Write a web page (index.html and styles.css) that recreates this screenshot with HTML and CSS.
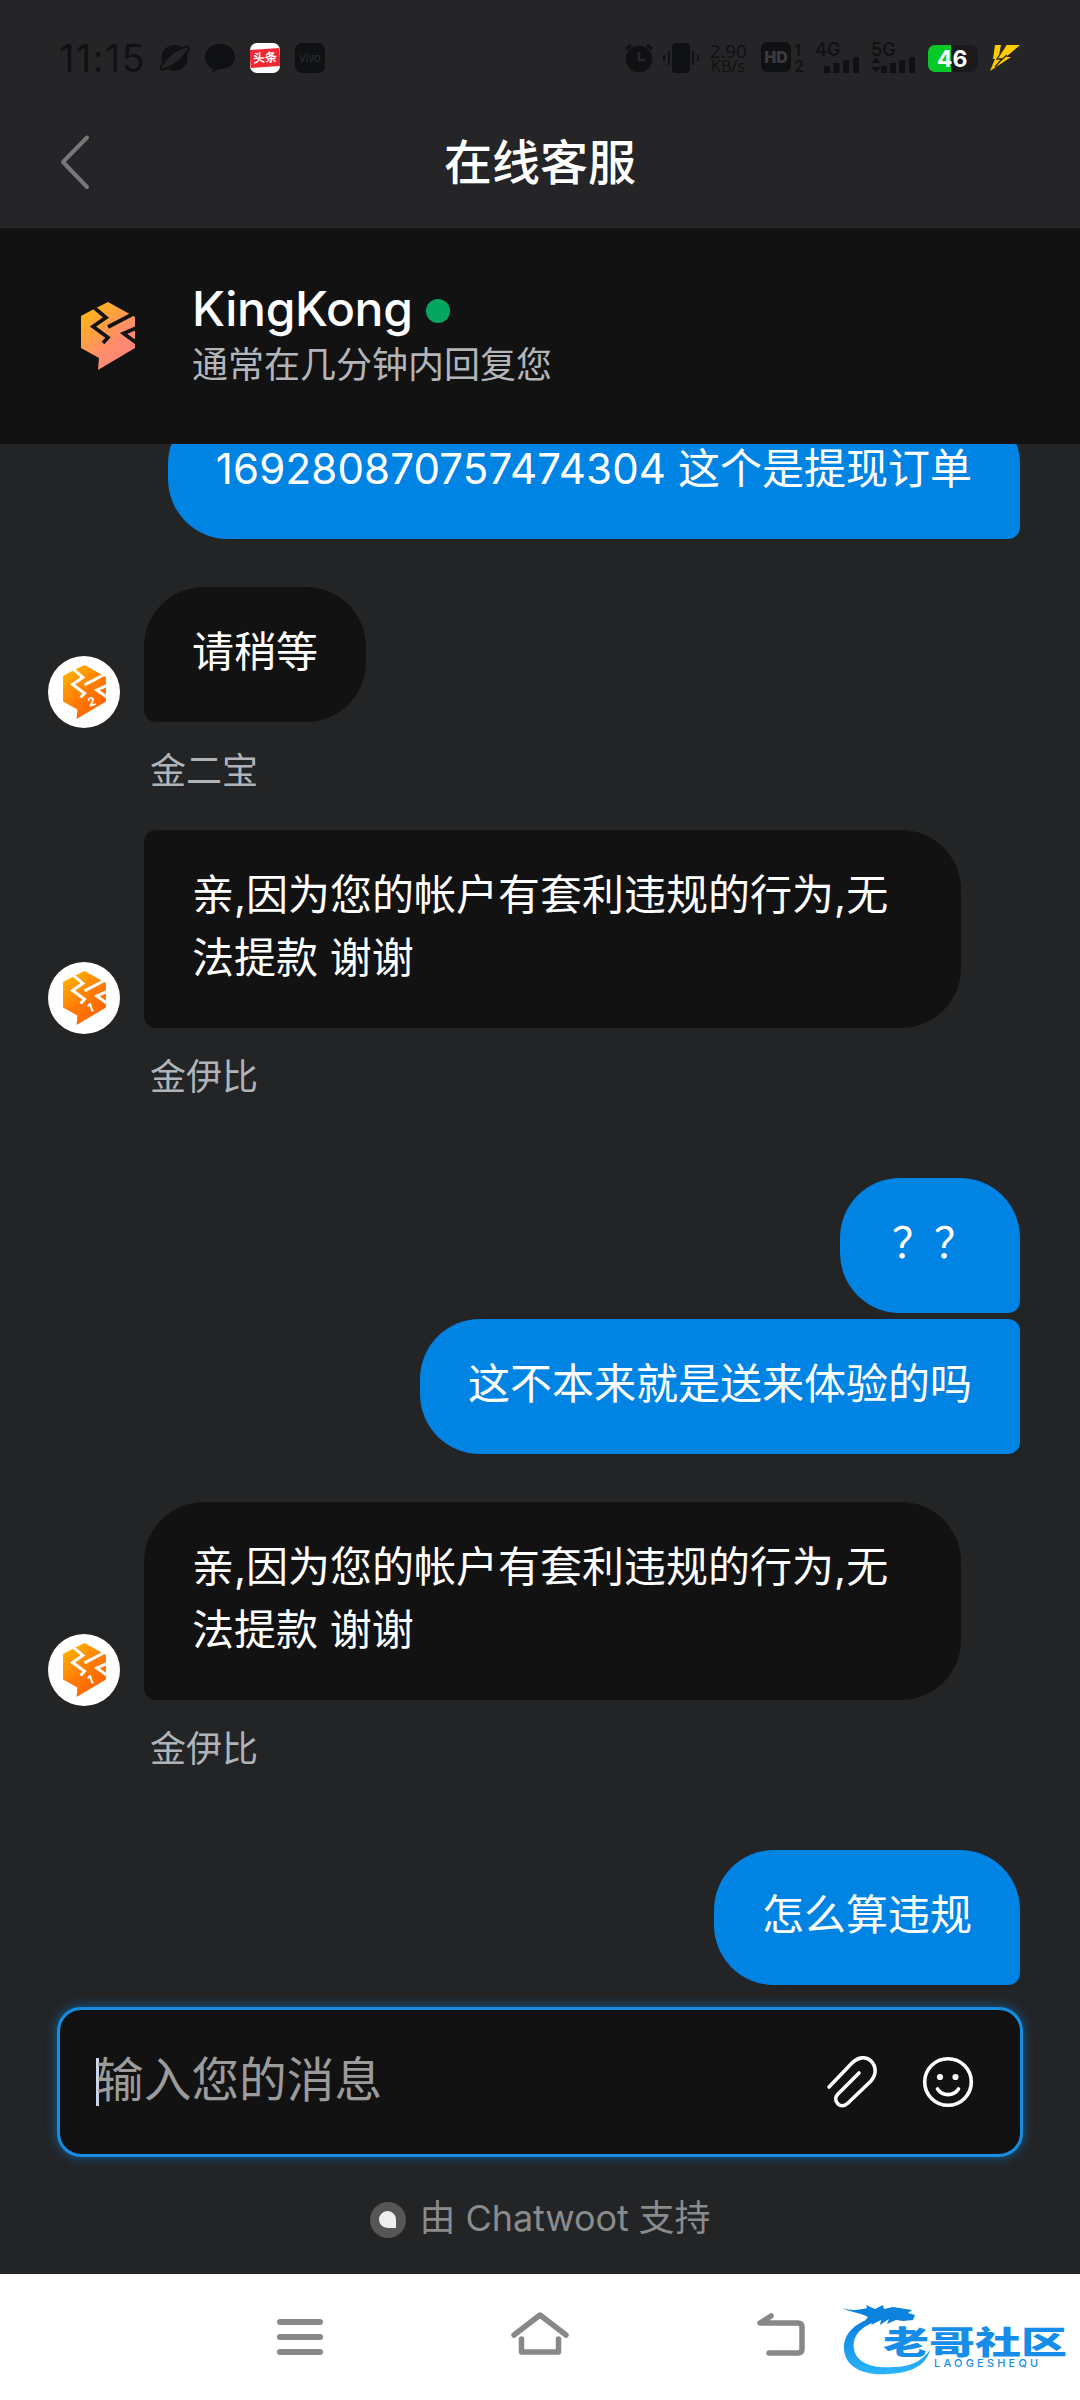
FILE: index.html
```html
<!DOCTYPE html>
<html lang="zh-CN">
<head>
<meta charset="utf-8">
<title>在线客服</title>
<link rel="stylesheet" href="styles.css">
</head>
<body>
<svg class="defs" width="0" height="0" aria-hidden="true">
  <defs>
    <linearGradient id="brand-fill" x1="0" y1="0" x2=".7" y2="1"><stop offset="0" stop-color="#ffbd00"/><stop offset=".65" stop-color="#ff8f68"/><stop offset="1" stop-color="#ff837d"/></linearGradient>
    <linearGradient id="agent-fill" x1="0" y1="0" x2=".7" y2="1"><stop offset="0" stop-color="#ffbd00"/><stop offset=".6" stop-color="#ff7a05"/><stop offset="1" stop-color="#ff6200"/></linearGradient>
    <linearGradient id="water-fill" x1="0" y1="0" x2="0" y2="1"><stop offset="0" stop-color="#087ddf"/><stop offset="1" stop-color="#2cb4fa"/></linearGradient>
    <symbol id="block" viewBox="0 0 54 68">
      <path d="M27 0 54 15V46L17 68 18 56 0 46V14L13 7Z"/>
      <path class="cut" d="M13 5.500 25 15.500 12 24.500 27 35.500 22 41M27 25 52 12M55 26 42.500 31.500 55 40.500"/>
    </symbol>
  </defs>
</svg>
<div class="screen">
  <header class="top">
    <div class="status">
      <span class="clock">11:15</span>
      <svg class="s-planet" width="30" height="28" viewBox="0 0 30 28"><circle cx="14.500" cy="14" r="13" fill="#101113"/><ellipse cx="14.500" cy="14" rx="13.500" ry="4" transform="rotate(-39 14.500 14)" fill="#252527"/><path d="M22 4c4-2 7-2 7 0s-1 4-3 6M7 24c-4 2-6 2-6 0s1-4 3-6" fill="none" stroke="#101113" stroke-width="2"/></svg>
      <svg class="s-chat" width="30" height="29" viewBox="0 0 30 29"><path d="M15 0C6 0 0 6 0 13c0 6 4 10 8 12l-1 4 7-4c10 0 16-5 16-12S24 0 15 0Z" fill="#101113"/></svg>
      <span class="s-news"><b>头条</b></span>
      <span class="s-vivo">vivo</span>
      <svg class="s-alarm" width="28" height="30" viewBox="0 0 28 30"><circle cx="14" cy="16" r="13.300" fill="#101113"/><path d="M1 6 6 2M27 6l-5-4" stroke="#101113" stroke-width="3"/><path d="M14 9v8h6" fill="none" stroke="#252527" stroke-width="2.500"/></svg>
      <svg class="s-vib" width="36" height="30" viewBox="0 0 36 30"><rect x="9" y="0" width="18" height="30" rx="4" fill="#101113"/><path d="M1 12v6M6 8v14M30 8v14M35 12v6" stroke="#101113" stroke-width="2"/></svg>
      <span class="s-speed">2.90<small>KB/s</small></span>
      <span class="s-hd"><b>HD</b><span>1<br>2</span></span>
      <span class="s-net"><b>4G</b><svg width="36" height="17" viewBox="0 0 36 17"><path d="M3 17v-7M12.500 17V7M22 17V4M32 17V1" stroke="#101113" stroke-width="6"/></svg></span>
      <span class="s-net five"><b>5G</b><svg width="45" height="17" viewBox="0 0 45 17"><path d="M0 7 5 2l5 5ZM0 11h10l-5 5Z" fill="#101113"/><path d="M13 17v-7M22 17V7M31 17V4M41 17V1" stroke="#101113" stroke-width="6"/></svg></span>
      <span class="s-batt">46</span>
      <svg class="s-bolt" width="30" height="26" viewBox="0 0 30 26"><path d="M5 0H11L9 10 16 0H30L16 12H21L0 26 5 14H3Z" fill="#fc0"/><path d="M16 0 7 14h5L5 22M17 10 8 18" fill="none" stroke="#252527" stroke-width="1.300"/></svg>
    </div>
    <div class="titlebar">
      <svg class="back" width="32" height="56" viewBox="0 0 32 56"><path d="M28 3.500 4 28 28 53" fill="none" stroke="#777779" stroke-width="4" stroke-linecap="round" stroke-linejoin="round"/></svg>
      <h1>在线客服</h1>
    </div>
  </header>
  <section class="brand">
    <svg class="brand-logo" width="54" height="68" fill="url(#brand-fill)"><use href="#block"/></svg>
    <div>
      <div class="brand-name"><span>KingKong</span><i></i></div>
      <div class="brand-sub">通常在几分钟内回复您</div>
    </div>
  </section>
  <main class="chat">
    <div class="out first"><p class="bubble"><span class="digits">169280870757474304</span> 这个是提现订单</p></div>
    <div class="in a">
      <span class="avatar"><svg width="43" height="54" fill="url(#agent-fill)"><use href="#block"/></svg><em>2</em></span>
      <p class="bubble">请稍等</p>
    </div>
    <div class="name">金二宝</div>
    <div class="in b">
      <span class="avatar"><svg width="43" height="54" fill="url(#agent-fill)"><use href="#block"/></svg><em>1</em></span>
      <p class="bubble joined">亲,因为您的帐户有套利违规的行为,无法提款 谢谢</p>
    </div>
    <div class="name">金伊比</div>
    <div class="out c"><p class="bubble marks">？？</p></div>
    <div class="out d"><p class="bubble joined">这不本来就是送来体验的吗</p></div>
    <div class="in e">
      <span class="avatar"><svg width="43" height="54" fill="url(#agent-fill)"><use href="#block"/></svg><em>1</em></span>
      <p class="bubble">亲,因为您的帐户有套利违规的行为,无法提款 谢谢</p>
    </div>
    <div class="name">金伊比</div>
    <div class="out f"><p class="bubble">怎么算违规</p></div>
  </main>
  <div class="composer">
    <span class="caret"></span>
    <span class="placeholder">输入您的消息</span>
    <svg class="clip" width="52" height="52" viewBox="0 0 52 52"><path d="M3 31 26 7C32 1 40 0 45 5s6 13 0 20L22 47c-4 4-8 3-10 1-3-3-3-7 0-10L33 17" fill="none" stroke="#fff" stroke-width="3.600" stroke-linecap="round" stroke-linejoin="round"/></svg>
    <svg class="smile" width="52" height="52" viewBox="0 0 52 52"><circle cx="26" cy="26" r="23.300" fill="none" stroke="#fff" stroke-width="3.600"/><circle cx="18" cy="21" r="3.100" fill="#fff"/><circle cx="33.500" cy="21" r="3.100" fill="#fff"/><path d="M15.500 33c5 7.500 16 7.500 21 0" fill="none" stroke="#fff" stroke-width="3.600" stroke-linecap="round"/></svg>
  </div>
  <footer class="powered">
    <svg width="36" height="36" viewBox="0 0 36 36"><circle cx="18" cy="18" r="18" fill="#565656"/><path d="M26 26V17a8.500 8.500 0 1 0-8.500 9Z" fill="#eee"/></svg>
    <span>由 Chatwoot 支持</span>
  </footer>
  <nav class="keys">
    <svg class="menu" width="46" height="38" viewBox="0 0 46 38"><path d="M3 4h40M3 19h40M3 34h40" stroke="#888" stroke-width="6" stroke-linecap="round"/></svg>
    <svg class="home" width="58" height="46" viewBox="0 0 58 46"><path d="M3 24 29 4 55 24M10.500 28V41H47.500V28" fill="none" stroke="#888" stroke-width="5.500" stroke-linecap="round" stroke-linejoin="round"/></svg>
    <svg class="return" width="50" height="46" viewBox="0 0 50 46"><path d="M15 5 4 12H42Q46 12 46 16V38Q46 42 42 42H13" fill="none" stroke="#888" stroke-width="5.500" stroke-linecap="round" stroke-linejoin="round"/></svg>
  </nav>
  <div class="watermark">
    <svg width="94" height="74" viewBox="0 0 94 74"><path d="M31 14C11 19 1 32 2 45c1 20 23 27 44 25 24-1 38-9 42-24-9 12-21 17-36 17C29 65 14 58 12 45 10 32 19 22 36 17Z" fill="url(#water-fill)"/><path d="M0 4c9 3 18 2 25 0l-1-3 9 4 8-4 1 4 9-2 19 3-4 3 7 2-2 5-10 1-7-1-9 4 2-5-9 6 1-5-10 5 3-6-10 3 4-5C16 8 8 8 0 4Z" fill="#0b83de"/></svg>
    <div class="wm-text">老哥社区</div>
    <small>LAOGESHEQU</small>
  </div>
</div>
</body>
</html>
```
FILE: styles.css
```css
* { box-sizing: border-box; }
body {
  margin: 0;
  background: #232426;
  color: #fff;
  font-family: Inter, "Noto Sans CJK SC", sans-serif;
}
p, h1 { margin: 0; font-weight: 400; }
svg { display: block; flex: none; overflow: visible; }
.defs { position: absolute; }
.screen {
  position: relative;
  width: 1080px;
  height: 2400px;
  overflow: hidden;
  display: flex;
  flex-direction: column;
}
.top { height: 228px; background: #252527; border-bottom: 1px solid #2b2b2c; }

/* status bar */
.status {
  height: 116px;
  padding-left: 59px;
  display: flex;
  align-items: center;
  color: #101113;
  white-space: nowrap;
}
.clock { width: 101px; font-size: 38px; line-height: 40px; letter-spacing: 1.3px; }
.s-chat { margin-left: 15px; }
.s-news, .s-vivo {
  width: 30px;
  height: 30px;
  border-radius: 7px;
  margin-left: 15px;
  display: flex;
  align-items: center;
  justify-content: center;
  overflow: hidden;
}
.s-news { background: #fff; }
.s-news b { width: 30px; background: #ef2832; color: #fff; font-size: 12px; line-height: 18px; text-align: center; transform: rotate(-4deg); }
.s-vivo { background: #101113; color: #303033; font-size: 11px; }
.s-alarm { margin-left: 300px; }
.s-vib { margin-left: 10px; }
.s-speed { width: 38px; margin-left: 11px; font-size: 18.5px; line-height: 15px; font-family: "Noto Sans", sans-serif; }
.s-speed small { display: block; font-size: 16px; line-height: 16px; padding-left: 1px; }
.s-hd { margin-left: 13px; width: 43px; display: flex; gap: 3px; font-size: 16px; line-height: 16px; font-weight: 600; }
.s-hd b { width: 30px; height: 30px; border-radius: 6px; background: #101113; color: #3a3a3c; font-size: 16px; line-height: 30px; text-align: center; }
.s-net { width: 45px; height: 30px; margin-left: 11px; display: flex; flex-direction: column; align-items: flex-end; }
.s-net b { align-self: flex-start; font-size: 18px; line-height: 13px; font-weight: 600; }
.s-batt {
  width: 50px;
  height: 27px;
  margin-left: 12px;
  border-radius: 7px;
  background: linear-gradient(90deg, #07c927 23px, #1b1b1d 23px);
  color: #fff;
  font-size: 23px;
  line-height: 29px;
  font-weight: 700;
  padding-left: 9px;
}
.s-bolt { margin-left: 12px; }

.titlebar { height: 92px; display: flex; align-items: center; padding-left: 59px; }
.titlebar h1 { margin-left: 353px; padding-top: 2px; font-size: 48px; line-height: 60px; font-weight: 500; }

/* brand strip */
.brand { height: 216px; background: #121212; display: flex; align-items: center; padding-left: 81px; }
.brand > div { margin-left: 57px; }
.brand-logo { --cut: #121212; }
.cut { fill: none; stroke: var(--cut); stroke-width: 3.7; }
.brand-name { display: flex; align-items: center; gap: 13px; font-size: 48px; line-height: 58px; font-weight: 500; }
.brand-name span { letter-spacing: -.3px; }
.brand-name i { width: 24px; height: 24px; border-radius: 50%; background: #05a660; margin-top: 4px; }
.brand-sub { font-size: 36px; line-height: 54px; color: #b2b5b9; }

/* conversation: newest message sits at the bottom, older ones are clipped */
.chat {
  height: 1563px;
  padding: 0 60px 22px 48px;
  display: flex;
  flex-direction: column;
  justify-content: flex-end;
  overflow: hidden;
}
.chat > div { flex: none; }
.bubble { padding: 33px 48px 39px; font-size: 42px; line-height: 63px; border-radius: 60px; }
.out { display: flex; justify-content: flex-end; }
.out .bubble { background: #0084e4; border-bottom-right-radius: 12px; }
.out .joined { border-top-right-radius: 12px; }
.out .marks { padding-left: 52px; padding-right: 44px; }
.digits { letter-spacing: .16px; }
.in { display: flex; align-items: flex-end; gap: 24px; }
.in .bubble { background: #121212; max-width: 817px; border-bottom-left-radius: 12px; }
.in .joined { border-top-left-radius: 12px; }
.avatar {
  --cut: #fff;
  position: relative;
  flex: none;
  width: 72px;
  height: 72px;
  margin-bottom: -6px;
  border-radius: 50%;
  background: #fff;
  display: flex;
  align-items: center;
  justify-content: center;
}
.avatar em { position: absolute; left: 40px; top: 37px; font: 700 12px/18px Inter, sans-serif; transform: rotate(-20deg); }
.name { padding-left: 102px; height: 54px; margin-top: 21px; font-size: 36px; line-height: 56px; color: #b0b4b8; }
.a { margin-top: 48px; }
.b { margin-top: 33px; }
.c { margin-top: 75px; }
.d { margin-top: 6px; }
.e { margin-top: 48px; }
.f { margin-top: 75px; }

/* message field */
.composer {
  flex: none;
  height: 150px;
  margin: 0 57px;
  padding: 0 46px 0 36px;
  border: 3px solid #178ee2;
  border-radius: 24px;
  background: #121212;
  box-shadow: 0 0 12px #0084e4a0;
  display: flex;
  align-items: center;
}
.caret { width: 3px; height: 48px; margin-right: -3px; background: #c9d6ec; }
.placeholder { flex: 1; font-size: 47.7px; line-height: 72px; color: #9b9b9b; margin-top: -4px; }
.smile { margin-left: 44px; }

.powered { height: 117px; padding-top: 8px; display: flex; align-items: center; justify-content: center; gap: 14px; font-size: 36px; line-height: 54px; color: #8a8b8d; }
.powered span { margin-top: -4px; letter-spacing: -.1px; }

.keys { height: 126px; background: #fff; display: flex; align-items: center; padding-left: 277px; }
.home { margin-left: 188px; margin-top: -6px; }
.return { margin-left: 187px; margin-top: -6px; }

.watermark { position: absolute; left: 842px; top: 2304px; width: 226px; height: 74px; color: #168de8; }
.watermark svg { position: absolute; left: 0; top: 0; }
.wm-text { position: absolute; left: 41px; top: 18px; font-size: 46px; line-height: 40px; font-weight: 900; white-space: nowrap; transform: scaleY(.68); transform-origin: 0 50%; }
.watermark small { position: absolute; left: 92px; top: 53px; font-size: 11px; line-height: 13px; font-weight: 500; letter-spacing: 3.2px; }
```
